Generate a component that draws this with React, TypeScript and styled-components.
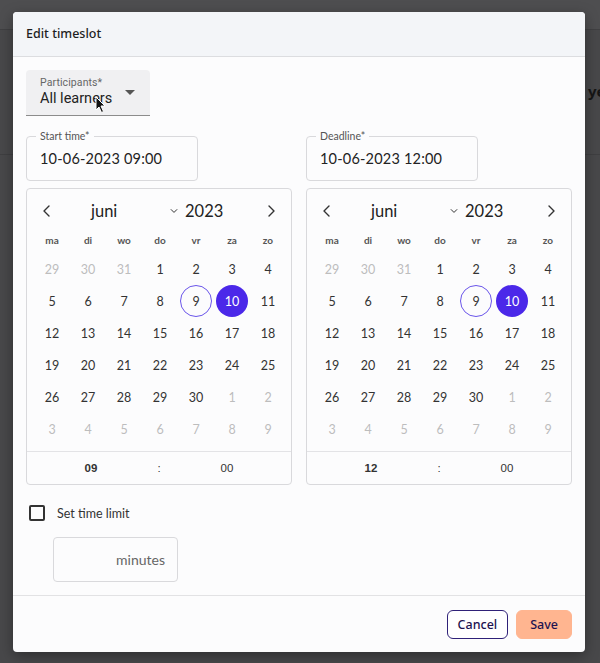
import React from "react";
import styled, { createGlobalStyle } from "styled-components";

const Global = createGlobalStyle`
  html, body { margin: 0; padding: 0; }
  body { width: 600px; height: 663px; overflow: hidden; background: #4a4a4c; font-family: Lato, "Noto Sans", sans-serif; }
  * { box-sizing: border-box; }
`;

const Backdrop = styled.div`
  position: relative;
  width: 600px;
  height: 663px;
  background: #48484a;
  display: flex;
  flex-direction: column;
  overflow: hidden;
`;

const BgTopBar = styled.div`
  height: 30px;
  background: #4e4e50;
  border-bottom: 1px solid #404042;
`;

const BgSection = styled.div`
  height: 125px;
  border-bottom: 1px solid #3f3f41;
  display: flex;
  align-items: center;
  padding-left: 556px;
  padding-bottom: 2px;
`;

const BgText = styled.span`
  font-family: "Noto Sans", sans-serif;
  font-weight: 700;
  font-size: 15px;
  color: #151515;
  white-space: nowrap;
`;

const Dialog = styled.div`
  position: absolute;
  top: 12px;
  left: 13px;
  width: 572px;
  height: 640px;
  background: #fcfcfd;
  border-radius: 4px;
  box-shadow: 0 4px 14px rgba(0, 0, 0, 0.35);
  display: flex;
  flex-direction: column;
  overflow: hidden;
`;

const Header = styled.div`
  height: 45px;
  background: #f3f5f8;
  border-bottom: 1px solid #dcdde0;
  display: flex;
  align-items: center;
  padding: 0 13px 1px;
`;

const Title = styled.h2`
  margin: 0;
  font-family: "Noto Sans", sans-serif;
  font-size: 12.5px;
  font-weight: 500;
  color: #1e1e1e;
`;

const Body = styled.div`
  flex: 1;
  padding: 13px 13px 0;
  display: flex;
  flex-direction: column;
  border-bottom: 1px solid #e2e2e4;
`;

const SelectBox = styled.div`
  position: relative;
  width: 124px;
  height: 46px;
  background: #f0f0f2;
  border-radius: 4px 4px 0 0;
  border-bottom: 1px solid #8c8c8c;
  padding: 6px 14px 0;
  display: flex;
  flex-direction: column;
`;

const SelectLabel = styled.span`
  font-family: Roboto, sans-serif;
  font-size: 10.5px;
  color: #666;
  letter-spacing: 0.1px;
`;

const SelectValue = styled.span`
  font-family: Roboto, sans-serif;
  font-size: 14.5px;
  color: #222;
  margin-top: 1px;
`;

const Caret = styled.span`
  position: absolute;
  right: 15px;
  top: 20px;
  width: 0;
  height: 0;
  border-left: 5px solid transparent;
  border-right: 5px solid transparent;
  border-top: 5px solid #555;
`;

const Cursor = styled.svg`
  position: absolute;
  left: 69px;
  top: 26px;
`;

const Columns = styled.div`
  display: grid;
  grid-template-columns: 266px 266px;
  column-gap: 14px;
  margin-top: 20px;
`;

const Column = styled.div`
  display: flex;
  flex-direction: column;
  gap: 7px;
`;

const Outlined = styled.div<{ $w: number }>`
  position: relative;
  width: ${(p) => p.$w}px;
  height: 45px;
  border: 1px solid #d9d9dc;
  border-radius: 4px;
  display: flex;
  align-items: center;
  padding: 0 13px;
`;

const Legend = styled.span`
  position: absolute;
  top: -7px;
  left: 9px;
  padding: 0 4px;
  background: #fcfcfd;
  font-size: 10.5px;
  color: #555;
  line-height: 12px;
`;

const FieldValue = styled.span`
  font-size: 14.5px;
  color: #222;
  letter-spacing: 0.2px;
`;

const Calendar = styled.div`
  border: 1px solid #d9d9dc;
  border-radius: 4px;
  height: 297px;
  display: flex;
  flex-direction: column;
`;

const CalHeader = styled.div`
  display: flex;
  align-items: center;
  height: 32px;
  margin-top: 6px;
  padding: 0 6px;
`;

const NavBtn = styled.button`
  width: 28px;
  height: 28px;
  border: none;
  background: none;
  padding: 0;
  display: flex;
  align-items: center;
  justify-content: center;
  color: #333;
`;

const DropSel = styled.div<{ $w: number; $pl: number }>`
  width: ${(p) => p.$w}px;
  padding-left: ${(p) => p.$pl}px;
  display: flex;
  align-items: center;
  justify-content: space-between;
  font-size: 16.5px;
  color: #222;
`;

const Grid = styled.div`
  display: grid;
  grid-template-columns: repeat(7, 36px);
  padding: 0 7px;
`;

const Weekday = styled.div`
  height: 26px;
  display: flex;
  align-items: center;
  justify-content: center;
  font-size: 10px;
  font-weight: 700;
  color: #555;
`;

const DayCell = styled.div`
  height: 32px;
  display: flex;
  align-items: center;
  justify-content: center;
`;

const Day = styled.span<{ $muted?: boolean; $sel?: boolean; $ring?: boolean }>`
  width: 32px;
  height: 32px;
  border-radius: 50%;
  display: flex;
  align-items: center;
  justify-content: center;
  font-size: 12.5px;
  color: ${(p) => (p.$sel ? "#fff" : p.$muted ? "#bdbdbd" : "#333")};
  background: ${(p) => (p.$sel ? "#4b28e9" : "transparent")};
  border: 1px solid ${(p) => (p.$ring ? "#6a55ea" : "transparent")};
`;

const TimeRow = styled.div`
  margin-top: auto;
  height: 33px;
  border-top: 1px solid #e3e3e6;
  display: grid;
  grid-template-columns: repeat(3, 68px);
  justify-content: center;
  align-items: center;
  font-family: "Liberation Sans", Arial, sans-serif;
  font-size: 11.5px;
  color: #333;
`;

const TimePart = styled.span<{ $bold?: boolean }>`
  text-align: center;
  font-weight: ${(p) => (p.$bold ? 700 : 400)};
`;

const CheckRow = styled.label`
  display: flex;
  align-items: center;
  gap: 12px;
  margin-top: 16px;
  padding-left: 3px;
  height: 24px;
`;

const Box = styled.span`
  width: 16px;
  height: 16px;
  border: 2px solid #333;
  border-radius: 2px;
`;

const CheckText = styled.span`
  font-size: 12.5px;
  color: #333;
`;

const Minutes = styled.div`
  margin: 12px 0 0 27px;
  width: 125px;
  height: 45px;
  border: 1px solid #d9d9dc;
  border-radius: 4px;
  display: flex;
  align-items: center;
  justify-content: flex-end;
  padding-right: 12px;
  font-size: 14px;
  color: #666;
`;

const Footer = styled.div`
  height: 56px;
  display: flex;
  align-items: center;
  justify-content: flex-end;
  gap: 8px;
  padding: 0 13px;
`;

const Button = styled.button<{ $primary?: boolean }>`
  height: 29px;
  padding: 0 ${(p) => (p.$primary ? 13 : 10)}px;
  border-radius: 6px;
  font-family: "Noto Sans", sans-serif;
  font-size: 12.5px;
  font-weight: 500;
  color: #1d1350;
  background: ${(p) => (p.$primary ? "#ffb590" : "#fff")};
  border: 1px solid ${(p) => (p.$primary ? "#ffb590" : "#2f2178")};
`;

const Chevron = ({ dir }: { dir: "left" | "right" | "down" }) => {
  const d =
    dir === "left" ? "M9 2 L4 7 L9 12" : dir === "right" ? "M5 2 L10 7 L5 12" : "M3 5 L7 9 L11 5";
  const size = dir === "down" ? 10 : 14;
  return (
    <svg width={size} height={size} viewBox="0 0 14 14" fill="none">
      <path d={d} stroke="#333" strokeWidth={1.4} strokeLinecap="round" strokeLinejoin="round" />
    </svg>
  );
};

const weekdays = ["ma", "di", "wo", "do", "vr", "za", "zo"];

type DayItem = { n: number; muted?: boolean };
const days: DayItem[] = [
  { n: 29, muted: true },
  { n: 30, muted: true },
  { n: 31, muted: true },
  ...Array.from({ length: 30 }, (_, i) => ({ n: i + 1 })),
  ...Array.from({ length: 9 }, (_, i) => ({ n: i + 1, muted: true })),
];

const CalendarView = ({ hour }: { hour: string }) => (
  <Calendar>
    <CalHeader>
      <NavBtn>
        <Chevron dir="left" />
      </NavBtn>
      <DropSel $w={118} $pl={30}>
        <span>juni</span>
        <Chevron dir="down" />
      </DropSel>
      <DropSel $w={78} $pl={6}>
        <span>2023</span>
      </DropSel>
      <NavBtn>
        <Chevron dir="right" />
      </NavBtn>
    </CalHeader>
    <Grid>
      {weekdays.map((w) => (
        <Weekday key={w}>{w}</Weekday>
      ))}
      {days.map((d, i) => (
        <DayCell key={i}>
          <Day $muted={d.muted} $sel={!d.muted && d.n === 10} $ring={!d.muted && d.n === 9}>
            {d.n}
          </Day>
        </DayCell>
      ))}
    </Grid>
    <TimeRow>
      <TimePart $bold>{hour}</TimePart>
      <TimePart>:</TimePart>
      <TimePart>00</TimePart>
    </TimeRow>
  </Calendar>
);

export default function App() {
  return (
    <>
      <Global />
      <Backdrop>
        <BgTopBar />
        <BgSection>
          <BgText>Not yet</BgText>
        </BgSection>
        <Dialog>
          <Header>
            <Title>Edit timeslot</Title>
          </Header>
          <Body>
            <SelectBox>
              <SelectLabel>Participants*</SelectLabel>
              <SelectValue>All learners</SelectValue>
              <Caret />
              <Cursor width="12" height="18" viewBox="0 0 12 18">
                <path d="M1 1 L1 14 L4 11 L6.5 16.5 L8.5 15.5 L6 10 L10 10 Z" fill="#111" stroke="#fff" strokeWidth="1" />
              </Cursor>
            </SelectBox>
            <Columns>
              <Column>
                <Outlined $w={172}>
                  <Legend>Start time*</Legend>
                  <FieldValue>10-06-2023 09:00</FieldValue>
                </Outlined>
                <CalendarView hour="09" />
              </Column>
              <Column>
                <Outlined $w={172}>
                  <Legend>Deadline*</Legend>
                  <FieldValue>10-06-2023 12:00</FieldValue>
                </Outlined>
                <CalendarView hour="12" />
              </Column>
            </Columns>
            <CheckRow>
              <Box />
              <CheckText>Set time limit</CheckText>
            </CheckRow>
            <Minutes>minutes</Minutes>
          </Body>
          <Footer>
            <Button>Cancel</Button>
            <Button $primary>Save</Button>
          </Footer>
        </Dialog>
      </Backdrop>
    </>
  );
}
